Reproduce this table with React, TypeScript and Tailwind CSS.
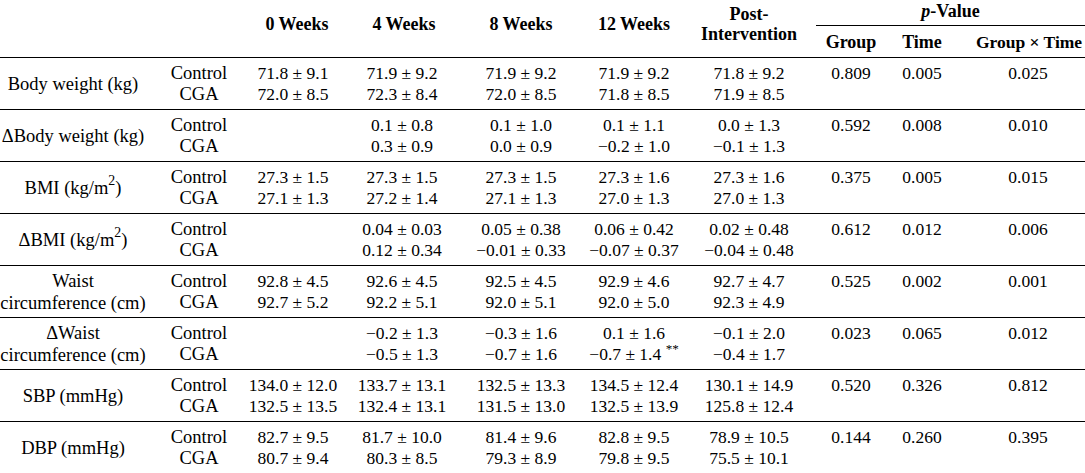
import React from 'react';

type Row = {
  label: React.ReactNode;
  control: string[];
  cga: React.ReactNode[];
  p: string[];
};

const rows: Row[] = [
  {
    label: 'Body weight (kg)',
    control: ['71.8 ± 9.1', '71.9 ± 9.2', '71.9 ± 9.2', '71.9 ± 9.2', '71.8 ± 9.2'],
    cga: ['72.0 ± 8.5', '72.3 ± 8.4', '72.0 ± 8.5', '71.8 ± 8.5', '71.9 ± 8.5'],
    p: ['0.809', '0.005', '0.025'],
  },
  {
    label: 'ΔBody weight (kg)',
    control: ['', '0.1 ± 0.8', '0.1 ± 1.0', '0.1 ± 1.1', '0.0 ± 1.3'],
    cga: ['', '0.3 ± 0.9', '0.0 ± 0.9', '−0.2 ± 1.0', '−0.1 ± 1.3'],
    p: ['0.592', '0.008', '0.010'],
  },
  {
    label: (
      <>
        BMI (kg/m<sup>2</sup>)
      </>
    ),
    control: ['27.3 ± 1.5', '27.3 ± 1.5', '27.3 ± 1.5', '27.3 ± 1.6', '27.3 ± 1.6'],
    cga: ['27.1 ± 1.3', '27.2 ± 1.4', '27.1 ± 1.3', '27.0 ± 1.3', '27.0 ± 1.3'],
    p: ['0.375', '0.005', '0.015'],
  },
  {
    label: (
      <>
        ΔBMI (kg/m<sup>2</sup>)
      </>
    ),
    control: ['', '0.04 ± 0.03', '0.05 ± 0.38', '0.06 ± 0.42', '0.02 ± 0.48'],
    cga: ['', '0.12 ± 0.34', '−0.01 ± 0.33', '−0.07 ± 0.37', '−0.04 ± 0.48'],
    p: ['0.612', '0.012', '0.006'],
  },
  {
    label: (
      <>
        Waist
        <br />
        circumference (cm)
      </>
    ),
    control: ['92.8 ± 4.5', '92.6 ± 4.5', '92.5 ± 4.5', '92.9 ± 4.6', '92.7 ± 4.7'],
    cga: ['92.7 ± 5.2', '92.2 ± 5.1', '92.0 ± 5.1', '92.0 ± 5.0', '92.3 ± 4.9'],
    p: ['0.525', '0.002', '0.001'],
  },
  {
    label: (
      <>
        ΔWaist
        <br />
        circumference (cm)
      </>
    ),
    control: ['', '−0.2 ± 1.3', '−0.3 ± 1.6', '0.1 ± 1.6', '−0.1 ± 2.0'],
    cga: [
      '',
      '−0.5 ± 1.3',
      '−0.7 ± 1.6',
      <>
        −0.7 ± 1.4 <sup>**</sup>
      </>,
      '−0.4 ± 1.7',
    ],
    p: ['0.023', '0.065', '0.012'],
  },
  {
    label: 'SBP (mmHg)',
    control: ['134.0 ± 12.0', '133.7 ± 13.1', '132.5 ± 13.3', '134.5 ± 12.4', '130.1 ± 14.9'],
    cga: ['132.5 ± 13.5', '132.4 ± 13.1', '131.5 ± 13.0', '132.5 ± 13.9', '125.8 ± 12.4'],
    p: ['0.520', '0.326', '0.812'],
  },
  {
    label: 'DBP (mmHg)',
    control: ['82.7 ± 9.5', '81.7 ± 10.0', '81.4 ± 9.6', '82.8 ± 9.5', '78.9 ± 10.5'],
    cga: ['80.7 ± 9.4', '80.3 ± 8.5', '79.3 ± 8.9', '79.8 ± 9.5', '75.5 ± 10.1'],
    p: ['0.144', '0.260', '0.395'],
  },
];

// per-column padding so the centred text lands where the reference has it
const dataPad = ['pr-[7px]', 'pr-[4px]', 'pl-[4px]', '', 'pl-[7px]'];
const pPad = ['pl-[16px]', 'pr-[17px]', 'pr-[4px]'];

const grid =
  'grid grid-cols-[136px_110px_101px_114px_116px_114px_109px_86px_89px_110px]';

const App: React.FC = () => {
  return (
    <div className="w-[1085px] h-[473px] bg-white text-black [font-family:'Liberation_Serif','Times_New_Roman',serif] text-[17.5px] leading-[21px] overflow-hidden">
      {/* header */}
      <div className={`${grid} grid-rows-[26px_31px] font-bold text-[18px]`}>
        <div className="row-span-2" />
        <div className="row-span-2" />
        <div className="row-span-2 flex items-center justify-center pb-[9px] pl-[1px]">0 Weeks</div>
        <div className="row-span-2 flex items-center justify-center pb-[9px]">4 Weeks</div>
        <div className="row-span-2 flex items-center justify-center pb-[9px] pl-[4px]">8 Weeks</div>
        <div className="row-span-2 flex items-center justify-center pb-[9px]">12 Weeks</div>
        <div className="row-span-2 flex flex-col items-center justify-center pb-[9px] pl-[7px] leading-[20px]">
          <span>Post-</span>
          <span>Intervention</span>
        </div>
        <div className="col-span-3 ml-[16px] border-b border-black flex items-center justify-center pb-[2px]">
          <span>
            <i>p</i>-Value
          </span>
        </div>
        <div className="flex items-center justify-center pl-[16px] pt-[1px]">Group</div>
        <div className="flex items-center justify-center pr-[17px] pt-[1px]">Time</div>
        <div className="flex items-center justify-center pr-[2px] pt-[1px] whitespace-nowrap text-[17.5px]">
          Group × Time
        </div>
      </div>

      {/* body */}
      {rows.map((row, i) => (
        <div key={i} className={`${grid} h-[52px] border-t border-black`}>
          <div className="flex items-center justify-center text-center pl-[10px] whitespace-nowrap text-[18.5px] leading-[22px]">
            {row.label}
          </div>
          <div className="flex flex-col items-center pt-[5px] pl-[16px] text-[18.5px]">
            <span className="h-[21px]">Control</span>
            <span className="h-[21px]">CGA</span>
          </div>
          {row.control.map((v, j) => (
            <div
              key={j}
              className={`flex flex-col items-center pt-[5px] whitespace-nowrap ${dataPad[j]}`}
            >
              <span className="h-[21px]">{v}</span>
              <span className="h-[21px]">{row.cga[j]}</span>
            </div>
          ))}
          {row.p.map((v, j) => (
            <div key={j} className={`flex justify-center pt-[5px] ${pPad[j]}`}>
              {v}
            </div>
          ))}
        </div>
      ))}
    </div>
  );
};

export default App;
